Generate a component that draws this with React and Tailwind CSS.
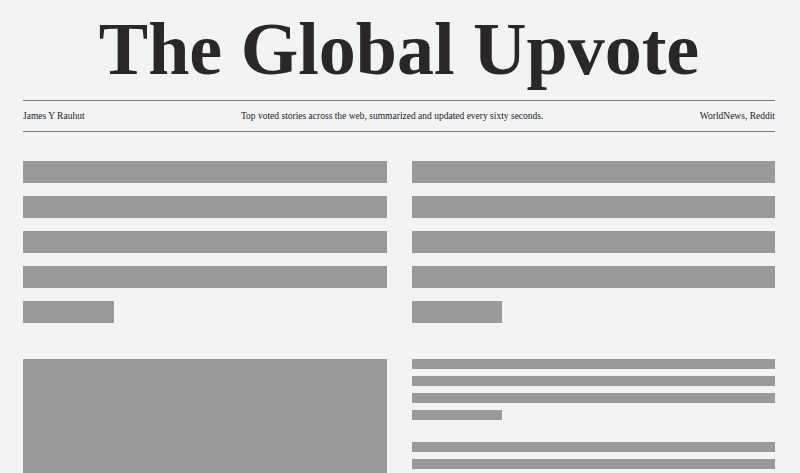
import React from "react";

const Bar = ({ className }) => <div className={`bg-[#9a9a9a] ${className}`} />;

const HeadlineBlock = () => (
  <div className="flex flex-col gap-[13px]">
    <Bar className="h-[22px] w-full" />
    <Bar className="h-[22px] w-full" />
    <Bar className="h-[22px] w-full" />
    <Bar className="h-[22px] w-full" />
    <Bar className="h-[22px] w-1/4" />
  </div>
);

const SummaryBlock = () => (
  <div className="flex flex-col gap-[7px]">
    <Bar className="h-[10px] w-full" />
    <Bar className="h-[10px] w-full" />
    <Bar className="h-[10px] w-full" />
    <Bar className="h-[10px] w-1/4" />
  </div>
);

export default function App() {
  return (
    <div className="h-[473px] overflow-hidden bg-[#f2f3f5] pl-[23px] pr-[25px] font-[family-name:Liberation_Serif,serif] text-[#2b2727]">
      <h1 className="pt-[5px] text-center text-[74px] font-bold leading-[88px]">
        The Global Upvote
      </h1>

      <div className="mt-[7px] flex h-[32px] items-center justify-between border-y border-[#7a7a7a] text-[9.5px] text-[#222]">
        <span>James Y Rauhut</span>
        <span>Top voted stories across the web, summarized and updated every sixty seconds.</span>
        <span>WorldNews, Reddit</span>
      </div>

      <div className="mt-[29px] grid grid-cols-2 gap-x-[25px] gap-y-[36px]">
        <HeadlineBlock />
        <HeadlineBlock />

        <div className="h-[200px] bg-[#9a9a9a]" />
        <div className="flex flex-col gap-[22px]">
          <SummaryBlock />
          <SummaryBlock />
        </div>
      </div>
    </div>
  );
}
